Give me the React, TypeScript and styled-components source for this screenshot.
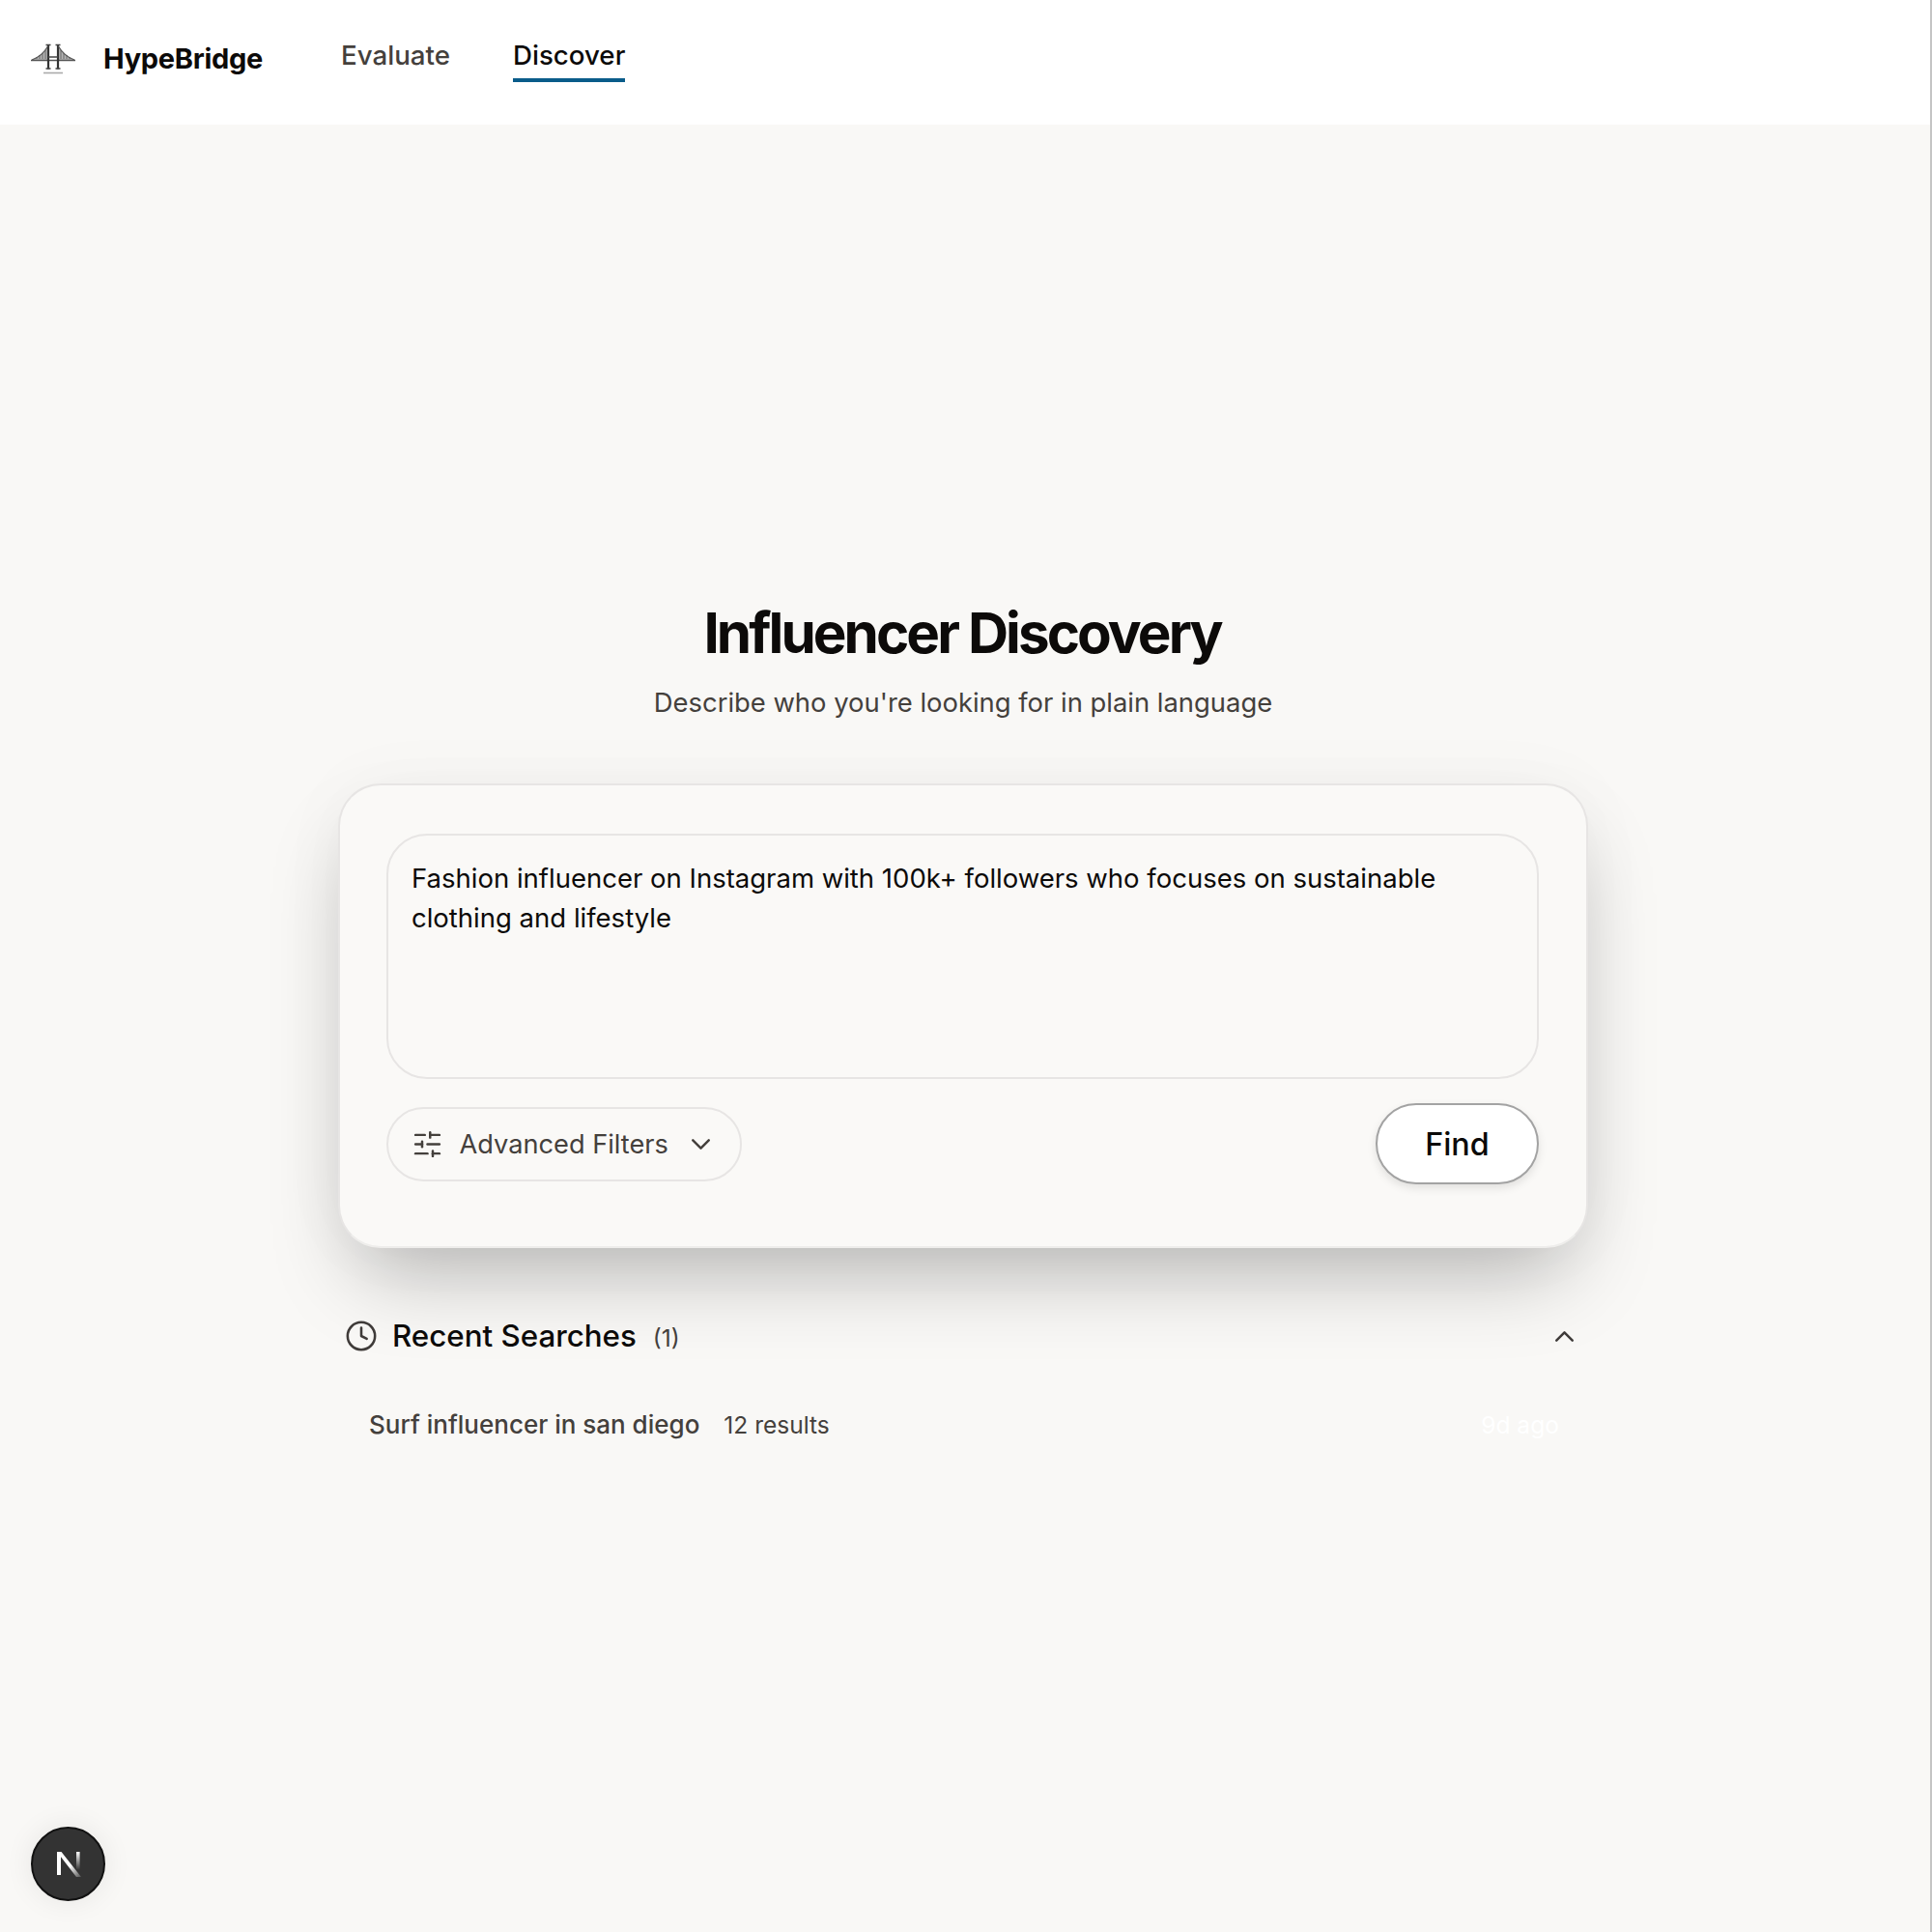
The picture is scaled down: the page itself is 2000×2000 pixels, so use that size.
import React from 'react'
import styled, { createGlobalStyle } from 'styled-components'
import { ChevronDown, ChevronUp, Clock, SlidersHorizontal } from 'lucide-react'

const GlobalStyle = createGlobalStyle`
  * {
    box-sizing: border-box;
  }

  body {
    margin: 0;
    background: #f9f8f6;
    font-family: Inter, 'Liberation Sans', sans-serif;
  }
`

const BridgeLogo = () => (
  <svg width="46" height="32" viewBox="0 0 46 32" fill="none">
    <path d="M1 17C8 14.5 14 9 17.5 3V17zM45 17C38 14.5 32 9 28.5 3V17z" fill="#b5b5b5" />
    <path d="M6 16v-2M9 16v-4M12 16v-6M15 16V7M31 16V7M34 16v-6M37 16v-4M40 16v-2" stroke="#666" strokeWidth="1" />
    <path d="M0 17.5h46" stroke="#555" strokeWidth="1.5" />
    <path d="M18 1.5v25M28 1.5v25" stroke="#333" strokeWidth="2.2" />
    <path d="M18 14h10M15.5 1.5h5M25.5 1.5h5M15.5 26h5M25.5 26h5" stroke="#444" strokeWidth="1.4" />
    <path d="M1 17C8 14.5 14 9 17.5 3M45 17C38 14.5 32 9 28.5 3" stroke="#555" strokeWidth="1.2" />
    <path d="M13 30.5h20" stroke="#aaa" strokeWidth="1.6" />
  </svg>
)

const NextMark = () => (
  <svg width="30" height="32" viewBox="0 0 30 32" fill="none">
    <defs>
      <linearGradient id="nextFadeA" x1="0" y1="0" x2="1" y2="1">
        <stop offset="0.55" stopColor="#fff" />
        <stop offset="1" stopColor="#fff" stopOpacity="0.15" />
      </linearGradient>
      <linearGradient id="nextFadeB" x1="0" y1="0" x2="0" y2="1">
        <stop offset="0" stopColor="#fff" />
        <stop offset="0.85" stopColor="#fff" stopOpacity="0" />
      </linearGradient>
    </defs>
    <rect x="3" y="3" width="4" height="24" fill="#fff" />
    <path d="M3 3h4.5L28 29h-5z" fill="url(#nextFadeA)" />
    <rect x="23" y="3" width="3.6" height="22" fill="url(#nextFadeB)" />
  </svg>
)

const App = () => (
  <>
    <GlobalStyle />
    <Page>
      <Header>
        <Brand>
          <BridgeLogo />
          <BrandName>HypeBridge</BrandName>
        </Brand>
        <Nav>
          <NavLink>Evaluate</NavLink>
          <NavLink $active>Discover</NavLink>
        </Nav>
      </Header>
      <Main>
        <Title>Influencer Discovery</Title>
        <Subtitle>Describe who you're looking for in plain language</Subtitle>
        <SearchCard>
          <QueryBox
            readOnly
            value="Fashion influencer on Instagram with 100k+ followers who focuses on sustainable clothing and lifestyle"
          />
          <CardActions>
            <FiltersButton>
              <SlidersHorizontal size={33} strokeWidth={1.8} />
              <span>Advanced Filters</span>
              <ChevronDown size={33} strokeWidth={1.8} />
            </FiltersButton>
            <FindButton>Find</FindButton>
          </CardActions>
        </SearchCard>
        <Recent>
          <RecentHeader>
            <RecentTitleGroup>
              <Clock size={34} strokeWidth={1.8} color="#3f3b39" />
              <RecentTitle>Recent Searches</RecentTitle>
              <RecentCount>(1)</RecentCount>
            </RecentTitleGroup>
            <ChevronUp size={33} strokeWidth={1.8} color="#3f3b39" />
          </RecentHeader>
          <RecentRow>
            <RecentQuery>Surf influencer in san diego</RecentQuery>
            <RecentResults>12 results</RecentResults>
            <RecentAge>9d ago</RecentAge>
          </RecentRow>
        </Recent>
      </Main>
      <DevBadge>
        <NextMark />
      </DevBadge>
    </Page>
  </>
)

export default App

const Page = styled.div`
  position: relative;
  min-height: 2000px;
  background: #f9f8f6;
  border-right: 2px solid #c4c4c4;
`

const Header = styled.header`
  display: flex;
  align-items: flex-start;
  height: 129px;
  padding: 0 0 0 32px;
  background: #fff;
`

const Brand = styled.div`
  display: flex;
  align-items: center;
  gap: 29px;
  width: 321px;
  height: 121px;
`

const BrandName = styled.span`
  font-size: 29px;
  font-weight: 700;
  color: #0c0a09;
  letter-spacing: -0.01em;
`

const Nav = styled.nav`
  display: flex;
  gap: 65px;
  padding-top: 40px;
`

const NavLink = styled.a<{ $active?: boolean }>`
  padding-bottom: 7px;
  font-size: 27.7px;
  font-weight: 500;
  line-height: 34px;
  color: ${({ $active }) => ($active ? '#0c0a09' : '#44403c')};
  border-bottom: 4px solid ${({ $active }) => ($active ? '#0a5c8a' : 'transparent')};
`

const Main = styled.main`
  display: flex;
  flex-direction: column;
  align-items: center;
  width: 1294px;
  margin-left: 350px;
  padding-top: 491px;
`

const Title = styled.h1`
  margin: 0 2px 0 0;
  font-size: 58.3px;
  font-weight: 700;
  line-height: 70px;
  letter-spacing: -0.05em;
  color: #0c0a09;
`

const Subtitle = styled.p`
  margin: 19px 0 0;
  font-size: 27.4px;
  line-height: 36px;
  color: #44403c;
`

const SearchCard = styled.section`
  width: 100%;
  margin-top: 66px;
  padding: 50px 49px 64px 48px;
  background: #faf9f7;
  border: 2px solid #e7e5e4;
  border-bottom-color: #eeedeb;
  border-radius: 44px;
  box-shadow:
    0 44px 88px -21px rgba(0, 0, 0, 0.28),
    0 0 80px rgba(0, 0, 0, 0.03);
`

const QueryBox = styled.textarea`
  display: block;
  width: 100%;
  height: 254px;
  padding: 24px 24px;
  resize: none;
  outline: none;
  background: transparent;
  border: 2px solid #e7e5e4;
  border-radius: 42px;
  font-family: inherit;
  font-size: 27.5px;
  line-height: 41px;
  color: #0c0a09;
`

const CardActions = styled.div`
  display: flex;
  align-items: center;
  justify-content: space-between;
  margin-top: 25px;
`

const FiltersButton = styled.button`
  display: flex;
  align-items: center;
  gap: 17px;
  height: 77px;
  padding: 0 24px 0 23.5px;
  background: transparent;
  border: 2px solid #e7e5e4;
  border-radius: 39px;
  font-family: inherit;
  font-size: 27.2px;
  color: #44403c;
`

const FindButton = styled.button`
  width: 169px;
  height: 84px;
  background: #fff;
  border: 2px solid #a3a3a3;
  border-radius: 42px;
  box-shadow: 0 4px 10px rgba(0, 0, 0, 0.1);
  font-family: inherit;
  font-size: 32.3px;
  font-weight: 500;
  color: #0c0a09;
`

const Recent = styled.section`
  width: 100%;
  margin-top: 72px;
`

const RecentHeader = styled.div`
  display: flex;
  align-items: center;
  justify-content: space-between;
  padding: 0 8px 0 7px;
`

const RecentTitleGroup = styled.div`
  display: flex;
  align-items: center;
`

const RecentTitle = styled.h2`
  margin: 0 0 0 15px;
  font-size: 31.3px;
  font-weight: 500;
  color: #0c0a09;
`

const RecentCount = styled.span`
  margin: 4px 0 0 17px;
  font-size: 24.6px;
  color: #44403c;
`

const RecentRow = styled.div`
  display: flex;
  align-items: center;
  margin-top: 57px;
  padding: 0 30px 0 32px;
`

const RecentQuery = styled.span`
  font-size: 26px;
  font-weight: 500;
  color: #44403c;
`

const RecentResults = styled.span`
  margin-left: 25px;
  font-size: 24.5px;
  color: #44403c;
`

const RecentAge = styled.span`
  margin-left: auto;
  font-size: 24.6px;
  color: #fff;
`

const DevBadge = styled.div`
  position: absolute;
  left: 32px;
  bottom: 32px;
  display: flex;
  align-items: center;
  justify-content: center;
  width: 77px;
  height: 77px;
  background: #333;
  border: 2px solid #111;
  border-radius: 50%;
  box-shadow: 0 0 30px rgba(0, 0, 0, 0.08);
`
